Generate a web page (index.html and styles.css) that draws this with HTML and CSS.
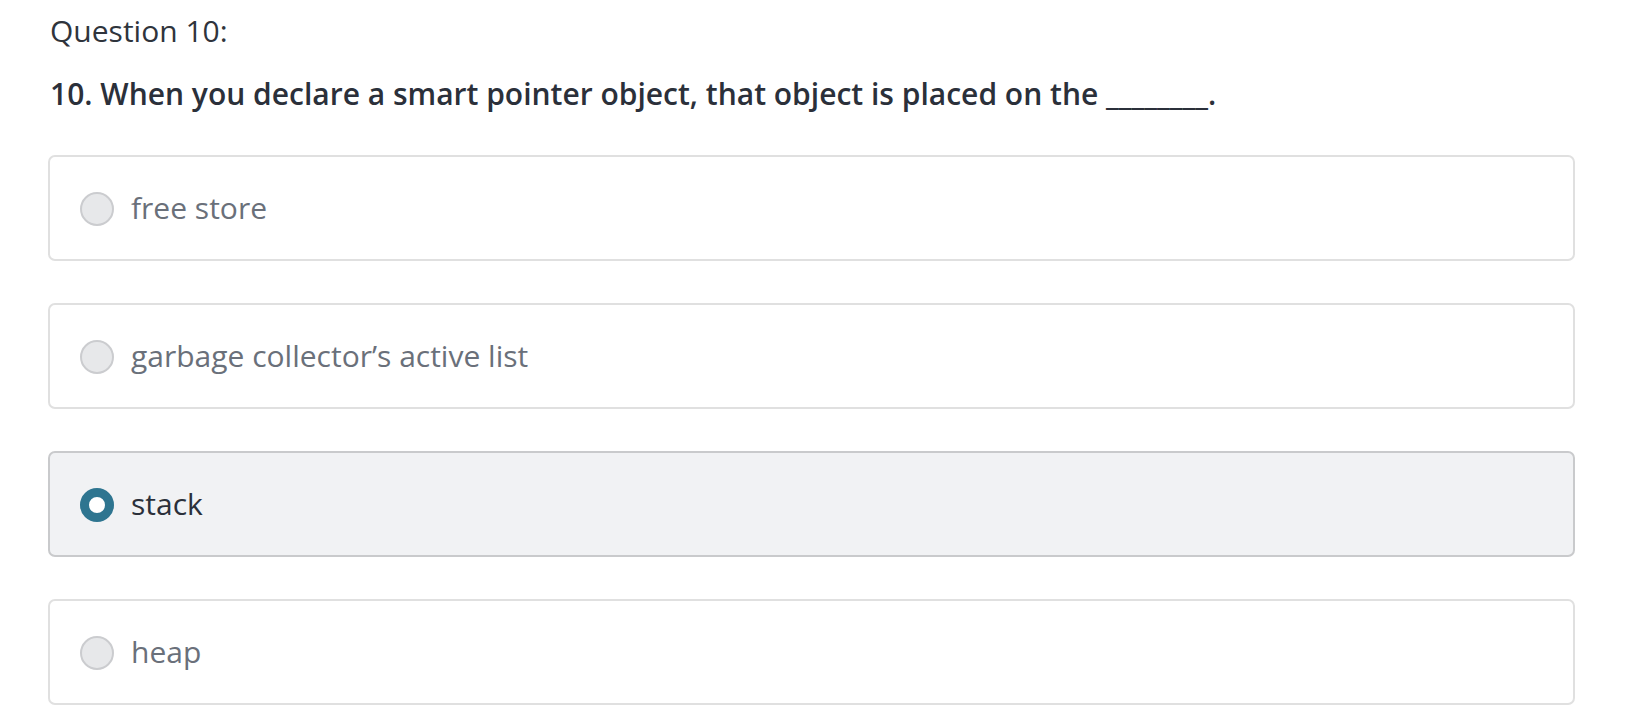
FILE: index.html
```html
<!DOCTYPE html>
<html lang="en">
<head>
<meta charset="utf-8">
<title>Question 10</title>
<link rel="stylesheet" href="styles.css">
</head>
<body>
<main class="quiz">
  <h2 class="quiz-title">Question 10:</h2>
  <p class="quiz-question">10. When you declare a smart pointer object, that object is placed on the ________.</p>
  <div class="options">
    <label class="option">
      <span class="radio"></span>
      <span class="option-text">free store</span>
    </label>
    <label class="option">
      <span class="radio"></span>
      <span class="option-text">garbage collector’s active list</span>
    </label>
    <label class="option option-selected">
      <span class="radio radio-checked"></span>
      <span class="option-text">stack</span>
    </label>
    <label class="option">
      <span class="radio"></span>
      <span class="option-text">heap</span>
    </label>
  </div>
</main>
</body>
</html>
```

FILE: styles.css
```css
* {
  box-sizing: border-box;
}

html, body {
  margin: 0;
  padding: 0;
  background: #ffffff;
}

body {
  font-family: "Open Sans", "Noto Sans", "Liberation Sans", sans-serif;
}

.quiz {
  width: 1527px;
  margin-left: 48px;
  padding-top: 11px;
}

.quiz-title {
  margin: 0;
  padding-left: 2px;
  font-size: 30px;
  line-height: 40px;
  font-weight: 400;
  color: #2f343c;
}

.quiz-question {
  margin: 24px 0 0 0;
  padding-left: 2px;
  font-size: 30px;
  line-height: 38px;
  font-weight: 600;
  color: #2b303a;
}

.options {
  margin-top: 42px;
  display: flex;
  flex-direction: column;
  gap: 42px;
}

.option {
  height: 106px;
  border: 2px solid #e0e0e0;
  border-radius: 7px;
  background: #ffffff;
  display: flex;
  align-items: center;
  padding-left: 30px;
  gap: 17px;
}

.option-selected {
  background: #f1f2f4;
  border-color: #c9cacc;
}

.radio {
  width: 34px;
  height: 34px;
  border-radius: 50%;
  border: 2px solid #cbcccf;
  background: #e7e8ea;
  flex: none;
  position: relative;
  top: 1px;
}

.radio-checked {
  border: 9px solid #2e7590;
  background: #ffffff;
}

.option-text {
  font-size: 30px;
  line-height: 40px;
  color: #6a707a;
}

.option-selected .option-text {
  color: #2b303a;
}
```
